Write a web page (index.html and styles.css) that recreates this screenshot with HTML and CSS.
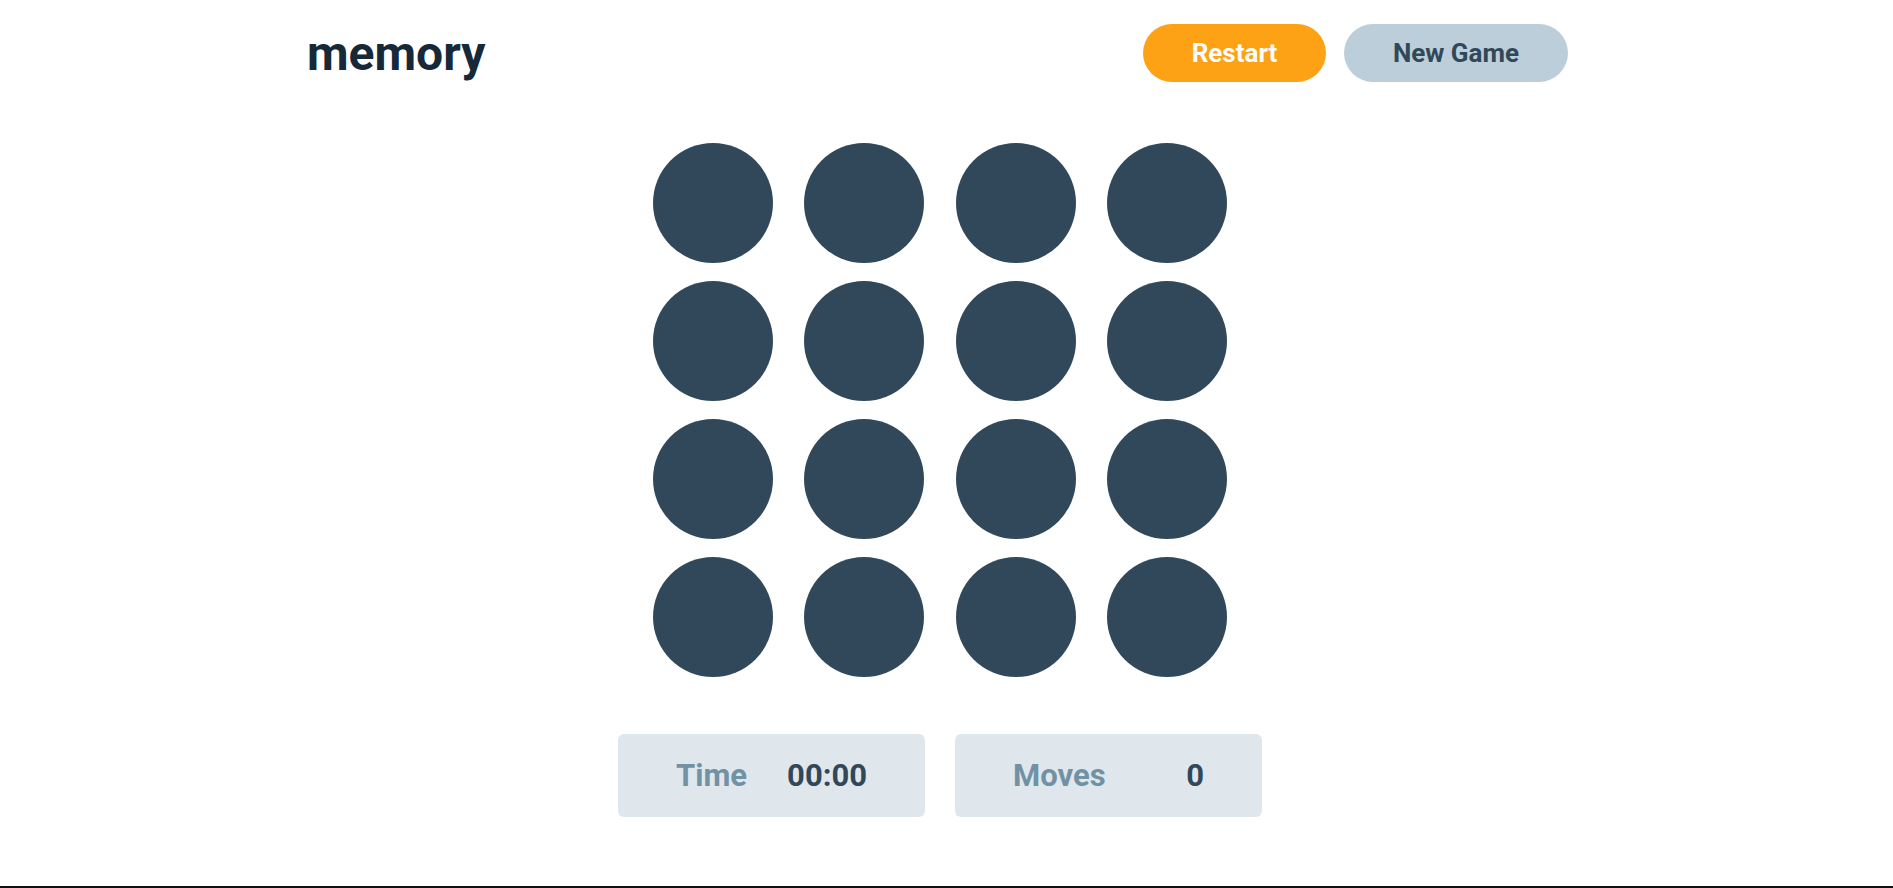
FILE: index.html
```html
<!DOCTYPE html>
<html lang="en">
<head>
<meta charset="utf-8">
<title>memory</title>
<link rel="stylesheet" href="styles.css">
</head>
<body>
<div class="app">
  <header class="header">
    <h1 class="logo">memory</h1>
    <div class="actions">
      <button class="btn btn-primary">Restart</button>
      <button class="btn btn-secondary">New Game</button>
    </div>
  </header>
  <main class="board">
    <div class="tile"></div><div class="tile"></div><div class="tile"></div><div class="tile"></div>
    <div class="tile"></div><div class="tile"></div><div class="tile"></div><div class="tile"></div>
    <div class="tile"></div><div class="tile"></div><div class="tile"></div><div class="tile"></div>
    <div class="tile"></div><div class="tile"></div><div class="tile"></div><div class="tile"></div>
  </main>
  <footer class="stats">
    <div class="stat"><span class="stat-label">Time</span><span class="stat-value">00:00</span></div>
    <div class="stat"><span class="stat-label">Moves</span><span class="stat-value">0</span></div>
  </footer>
</div>
</body>
</html>
```
FILE: styles.css
```css
* { box-sizing: border-box; }
html, body { margin: 0; padding: 0; }
body {
  font-family: Roboto, "Liberation Sans", sans-serif;
  background: #fff;
  height: 888px;
  border-bottom: 2px solid #111;
  overflow: hidden;
}
.app {
  display: flex;
  flex-direction: column;
  align-items: center;
  padding: 24px 13px 0 0;
}
.header {
  width: 1261px;
  height: 58px;
  margin-right: 5px;
  display: flex;
  align-items: center;
  justify-content: space-between;
}
.logo {
  margin: 0;
  font-size: 48px;
  font-weight: 700;
  color: #152938;
}
.actions { display: flex; gap: 18px; }
.btn {
  height: 58px;
  border: none;
  border-radius: 29px;
  font-family: inherit;
  font-size: 26px;
  font-weight: 700;
  cursor: pointer;
}
.btn-primary { width: 183px; background: #FDA214; color: #FCFCFC; }
.btn-secondary { width: 224px; background: #BCCED9; color: #304859; }
.board {
  margin-top: 61px;
  display: grid;
  grid-template-columns: repeat(4, 120px);
  column-gap: 31.33px;
  row-gap: 18px;
}
.tile {
  width: 120px;
  height: 120px;
  border-radius: 50%;
  background: #304859;
}
.stats {
  margin-top: 57px;
  display: flex;
  gap: 30px;
}
.stat {
  width: 307px;
  height: 83px;
  border-radius: 6px;
  background: #DFE7EC;
  display: flex;
  align-items: center;
  justify-content: space-between;
  padding: 0 58px;
  font-size: 31px;
  font-weight: 700;
}
.stat-label { color: #7191A5; }
.stat-value { color: #304859; }
```
